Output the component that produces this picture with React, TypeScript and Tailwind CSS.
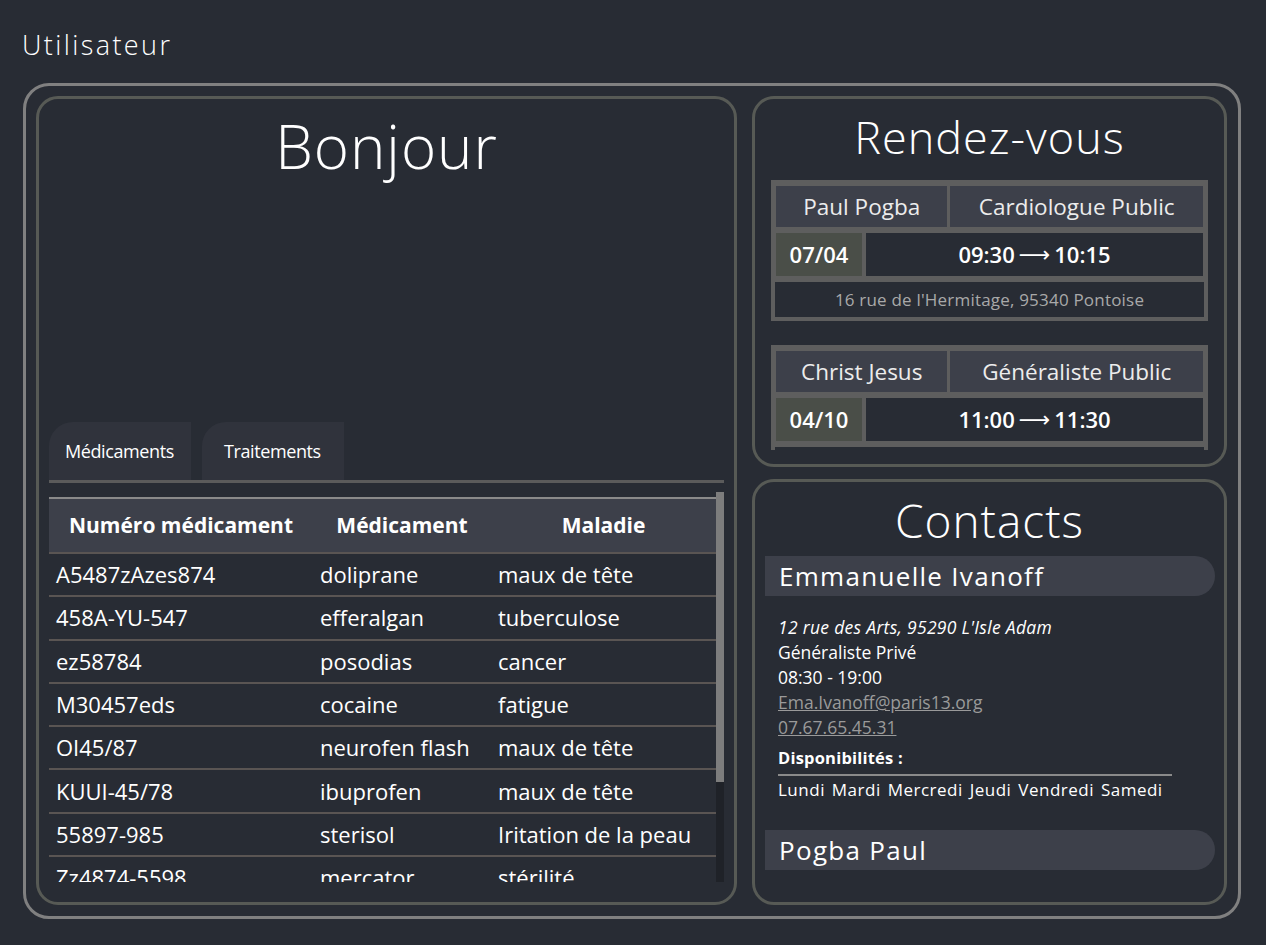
import React from 'react';

const meds = [
  { num: 'A5487zAzes874', name: 'doliprane', disease: 'maux de tête' },
  { num: '458A-YU-547', name: 'efferalgan', disease: 'tuberculose' },
  { num: 'ez58784', name: 'posodias', disease: 'cancer' },
  { num: 'M30457eds', name: 'cocaine', disease: 'fatigue' },
  { num: 'OI45/87', name: 'neurofen flash', disease: 'maux de tête' },
  { num: 'KUUI-45/78', name: 'ibuprofen', disease: 'maux de tête' },
  { num: '55897-985', name: 'sterisol', disease: 'Iritation de la peau' },
  { num: 'Zz4874-5598', name: 'mercator', disease: 'stérilité' },
  { num: 'PO-4578', name: 'smecta', disease: 'diarrhée' },
];

const appointments = [
  { doctor: 'Paul Pogba', type: 'Cardiologue Public', date: '07/04', from: '09:30', to: '10:15', address: "16 rue de l'Hermitage, 95340 Pontoise" },
  { doctor: 'Christ Jesus', type: 'Généraliste Public', date: '04/10', from: '11:00', to: '11:30', address: '3 place de la Gare, 95000 Cergy' },
];

function Appointment({ a }: { a: (typeof appointments)[number] }) {
  return (
    <div className="bg-[#5e5e5e] px-[5px] pt-[6px] pb-[4px] flex flex-col gap-[6px]">
      <div className="flex gap-[3px] h-[41px]">
        <div className="flex-[171] bg-[#3d404a] flex items-center justify-center text-[22.5px] text-[#ececec]">{a.doctor}</div>
        <div className="flex-[252] bg-[#3d404a] flex items-center justify-center text-[22.5px] text-[#ececec]">{a.type}</div>
      </div>
      <div className="flex gap-[4px] h-[43px]">
        <div className="w-[86px] bg-[#4a4e48] flex items-center justify-center text-[22px] font-semibold">{a.date}</div>
        <div className="flex-1 bg-[#282c34] flex items-center justify-center text-[22px] font-semibold">
          {a.from}
          <span className="mx-[4px] font-normal" style={{ fontFamily: '"DejaVu Sans", sans-serif' }}>⟶</span>
          {a.to}
        </div>
      </div>
      <div className="-mx-[1px] h-[35px] bg-[#282c34] flex items-center justify-center text-[17px] tracking-[0.2px] text-[#a9a9a9]">{a.address}</div>
    </div>
  );
}

function ContactBar({ name }: { name: string }) {
  return (
    <div className="ml-[10px] mr-[9px] h-[40px] bg-[#3d404a] rounded-r-full flex items-center pl-[14px] text-[26px] tracking-[1.3px] font-medium">
      {name}
    </div>
  );
}

export default function App() {
  return (
    <div
      className="min-h-screen bg-[#282c34] text-white px-[22px] pt-[26px]"
      style={{ fontFamily: '"Open Sans", "Noto Sans", sans-serif' }}
    >
      <h1 className="text-[27px] leading-[38px] font-light tracking-[2.4px]">Utilisateur</h1>

      <div className="mt-[19px] ml-[1px] w-[1218px] h-[836px] border-[3px] border-[#808080] rounded-[26px] p-[10px] flex gap-[15px]">
        {/* Left panel */}
        <div className="w-[701px] h-[809px] border-[3px] border-[#575a55] rounded-[22px] flex flex-col px-[10px]">
          <h2 className="pt-[11px] text-center text-[60px] leading-[72px] font-light tracking-[1px]">Bonjour</h2>

          <div className="mt-[240px] flex gap-[11px] h-[58px]">
            <div className="w-[142px] bg-[#30333c] rounded-tl-[24px] flex items-center pl-[16px] text-[18px] tracking-[-0.4px]">
              Médicaments
            </div>
            <div className="w-[142px] bg-[#30333c] rounded-tl-[24px] flex items-center pl-[22px] text-[18px] tracking-[-0.4px]">
              Traitements
            </div>
          </div>
          <div className="h-[3px] bg-[#5b5b5b]" />

          <div className="mt-[9px] h-[390px] flex">
            <div className="flex-1 overflow-hidden pt-[5px]">
              <div className="border-t-2 border-[#8a8a8a] h-[57px] bg-[#3d404a] flex items-center text-[21px] font-bold border-b-2 border-b-[#5a5553]">
                <div className="w-[264px] text-center">Numéro médicament</div>
                <div className="w-[178px] text-center">Médicament</div>
                <div className="flex-1 text-center">Maladie</div>
              </div>
              {meds.map((m) => (
                <div key={m.num} className="h-[43.3px] flex items-center text-[22px] border-b-2 border-[#5a5553] whitespace-nowrap">
                  <div className="w-[264px] pl-[7px]">{m.num}</div>
                  <div className="w-[178px] pl-[7px]">{m.name}</div>
                  <div className="flex-1 pl-[7px]">{m.disease}</div>
                </div>
              ))}
            </div>
            <div className="w-[8px] bg-[#1f2228] flex flex-col">
              <div className="h-[290px] bg-[#7d7d7d]" />
            </div>
          </div>
        </div>

        {/* Right column */}
        <div className="w-[475px] flex flex-col gap-[12px]">
          <div className="h-[371px] border-[3px] border-[#575a55] rounded-[22px]">
            <div className="h-[351px] overflow-hidden px-[16px]">
              <h2 className="pt-[11px] text-center text-[45px] leading-[54px] font-light tracking-[1px]">Rendez-vous</h2>
              <div className="mt-[16px] flex flex-col gap-[24px]">
                {appointments.map((a) => (
                  <Appointment key={a.doctor} a={a} />
                ))}
              </div>
            </div>
          </div>

          <div className="h-[426px] border-[3px] border-[#575a55] rounded-[22px] overflow-hidden">
            <h2 className="pt-[11px] text-center text-[46px] leading-[55px] font-light tracking-[1px]">Contacts</h2>
            <div className="mt-[8px]">
              <ContactBar name="Emmanuelle Ivanoff" />
              <div className="pl-[23px] pt-[19px] text-[17.5px] leading-[25px]">
                <div className="italic tracking-[0.3px]">12 rue des Arts, 95290 L'Isle Adam</div>
                <div>Généraliste Privé</div>
                <div>08:30 - 19:00</div>
                <div className="text-[#9a9a9a] underline">Ema.Ivanoff@paris13.org</div>
                <div className="text-[#9a9a9a] underline">07.67.65.45.31</div>
                <div className="mt-[6px] text-[16.5px] font-bold leading-[24px] tracking-[0.2px]">Disponibilités :</div>
                <div className="w-[394px] h-[2px] bg-[#8a8a8a] mt-[4px]" />
                <div className="text-[17px] leading-[28px] tracking-[0.5px] [word-spacing:2px]">Lundi Mardi Mercredi Jeudi Vendredi Samedi</div>
              </div>
              <div className="mt-[26px]">
                <ContactBar name="Pogba Paul" />
              </div>
            </div>
          </div>
        </div>
      </div>
    </div>
  );
}
